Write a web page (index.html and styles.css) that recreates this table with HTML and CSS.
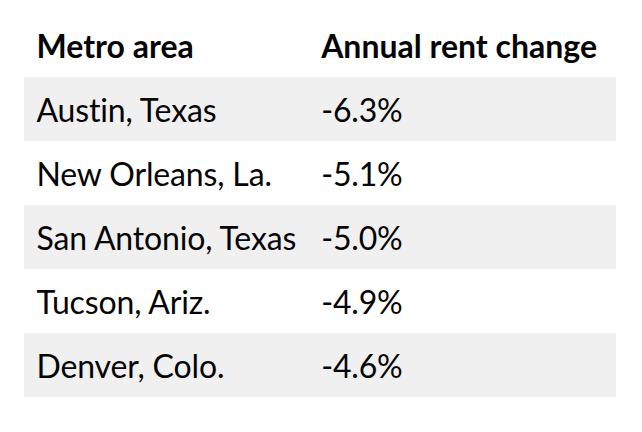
FILE: index.html
```html
<!DOCTYPE html>
<html>
<head>
<meta charset="utf-8">
<link rel="stylesheet" href="styles.css">
</head>
<body>
<div class="wrap">
<table class="rent">
  <thead>
    <tr><th class="c1">Metro area</th><th class="c2">Annual rent change</th></tr>
  </thead>
  <tbody>
    <tr class="alt"><td>Austin, Texas</td><td>-6.3%</td></tr>
    <tr><td>New Orleans, La.</td><td>-5.1%</td></tr>
    <tr class="alt"><td>San Antonio, Texas</td><td>-5.0%</td></tr>
    <tr><td>Tucson, Ariz.</td><td>-4.9%</td></tr>
    <tr class="alt"><td>Denver, Colo.</td><td>-4.6%</td></tr>
  </tbody>
</table>
</div>
</body>
</html>
```
FILE: styles.css
```css
html, body {
  margin: 0;
  padding: 0;
  background: #ffffff;
}
.wrap {
  padding: 13px 24px;
}
.rent {
  border-collapse: collapse;
  width: 592px;
  font-family: Lato, "Liberation Sans", sans-serif;
  color: #050505;
  font-size: 32px;
  letter-spacing: -0.15px;
}
.rent th, .rent td {
  height: 64px;
  padding: 0 12.5px;
  text-align: left;
  vertical-align: middle;
  white-space: nowrap;
}
.rent th {
  font-weight: 700;
  letter-spacing: 0;
}
.rent td {
  font-weight: 400;
}
.rent .c1 {
  width: 1px;
}
.rent tr.alt td {
  background: #f0f0f0;
}
```
